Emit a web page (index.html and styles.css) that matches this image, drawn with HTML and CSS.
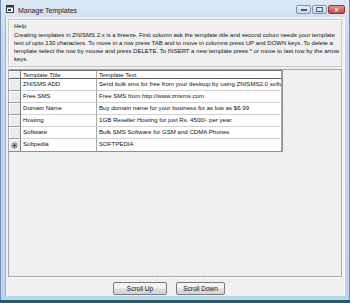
FILE: index.html
```html
<!DOCTYPE html>
<html lang="en">
<head>
    <meta charset="UTF-8">
    <title>Manage Templates</title>
    <link rel="stylesheet" href="styles.css">
</head>
<body>
    <div class="window">
        <div class="titlebar">
            <svg class="app-icon" width="8" height="8" viewBox="0 0 8 8">
                <rect x="0.5" y="0.5" width="7" height="7" fill="#fff" stroke="#2b3a4a"/>
                <rect x="0.5" y="0.5" width="7" height="2" fill="#2b3a4a"/>
                <rect x="2" y="4" width="3" height="2" fill="#2b3a4a"/>
            </svg>
            <span class="title">Manage Templates</span>
            <div class="controls">
                <span class="ctl"><i class="min-bar"></i></span>
                <span class="ctl"><i class="max-box"></i></span>
                <span class="ctl close">&#x2715;</span>
            </div>
        </div>

        <div class="client">
            <div class="help">
                <div class="help-title">Help</div>
                <p class="help-text">
                    Creating templates in ZNISMS 2.x is a breeze. First column ask the template title and second colum needs your template<br>
                    text of upto 130 characters. To move in a row press TAB and to move in columns press UP and DOWN keys. To delete a<br>
                    template select the row by mouse and press DELETE. To INSERT a new template press * or move to last row by the arrow<br>
                    keys.
                </p>
            </div>

            <div class="grid-box">
                <div class="grid">
                    <div class="row head">
                        <div class="cell rh"></div>
                        <div class="cell">Template Title</div>
                        <div class="cell">Template Text</div>
                    </div>
                    <div class="row">
                        <div class="cell rh"></div>
                        <div class="cell">ZNISMS ADD</div>
                        <div class="cell">Send bulk sms for free from your desktop by using ZNISMS2.0 software</div>
                    </div>
                    <div class="row">
                        <div class="cell rh"></div>
                        <div class="cell">Free SMS</div>
                        <div class="cell">Free SMS from http://www.znisms.com</div>
                    </div>
                    <div class="row">
                        <div class="cell rh"></div>
                        <div class="cell">Domain Name</div>
                        <div class="cell">Buy domain name for your business for as low as $6.99</div>
                    </div>
                    <div class="row">
                        <div class="cell rh"></div>
                        <div class="cell">Hosting</div>
                        <div class="cell">1GB Reseller Hosting for just Rs. 4500/- per year.</div>
                    </div>
                    <div class="row">
                        <div class="cell rh"></div>
                        <div class="cell">Software</div>
                        <div class="cell">Bulk SMS Software for GSM and CDMA Phones</div>
                    </div>
                    <div class="row last">
                        <div class="cell rh">
                            <svg width="7" height="7" viewBox="0 0 7 7">
                                <circle cx="3.5" cy="3.5" r="2.6" fill="none" stroke="#555" stroke-width="0.8"/>
                                <circle cx="3.5" cy="3.5" r="1.3" fill="#222"/>
                            </svg>
                        </div>
                        <div class="cell">Softpedia</div>
                        <div class="cell">SOFTPEDIA</div>
                    </div>
                </div>
            </div>

            <div class="buttons">
                <button class="btn up">Scroll Up</button>
                <button class="btn down">Scroll Down</button>
            </div>

            <div class="watermark">SOFTPEDIA<sup>&reg;</sup></div>
        </div>
    </div>
</body>
</html>
```

FILE: styles.css
```css
body {
    margin: 0;
    width: 350px;
    height: 303px;
    background-color: #1d5f6c;
    font-family: "Liberation Sans", Arial, sans-serif;
    overflow: hidden;
}
.window {
    width: 350px;
    height: 300px;
    box-sizing: border-box;
    background: linear-gradient(#dce8f6, #c4d8ef 40px, #bcd3ee);
    border-left: 1px solid #6d8db4;
    border-right: 1px solid #6d8db4;
    display: flex;
    flex-direction: column;
}
.titlebar {
    height: 17px;
    display: flex;
    align-items: center;
    padding-left: 5px;
}
.app-icon {
    margin-top: 1px;
}
.title {
    margin-left: 4px;
    font-size: 7px;
    color: #1b1b1b;
    margin-top: 3px;
}
.controls {
    margin-left: auto;
    margin-right: 4px;
    display: flex;
    gap: 1px;
    margin-top: 1px;
}
.ctl {
    width: 15px;
    height: 9px;
    box-sizing: border-box;
    border: 1px solid #7b95b6;
    border-radius: 2px;
    background: linear-gradient(#e6eef8, #c7d7ea);
    display: flex;
    align-items: center;
    justify-content: center;
}
.min-bar {
    width: 6px;
    height: 2px;
    background: #4a5d75;
    margin-top: 2px;
}
.max-box {
    width: 5px;
    height: 3px;
    border: 1px solid #4a5d75;
}
.ctl.close {
    width: 17px;
    border-color: #8a3b35;
    background: linear-gradient(#e0948a, #c6483b);
    color: #fff;
    font-size: 6px;
    font-weight: bold;
}
.client {
    position: relative;
    height: 279px;
    margin: 0 4px;
    background-color: #f0f0f0;
    border-left: 1px solid #9fb7d3;
    border-right: 1px solid #f5f9fd;
    display: flex;
    flex-direction: column;
}
.help {
    height: 48px;
    margin: 2px 2px 0 2px;
    box-sizing: border-box;
    border: 1px solid #c9c9c9;
    box-shadow: inset 1px 1px #fff;
    padding: 1px 0 0 5px;
    font-size: 6px;
    color: #111;
}
.help-title {
    line-height: 8px;
    margin-top: 1px;
}
.help-text {
    margin: 1px 0 0 0;
    line-height: 8px;
    white-space: nowrap;
}
.grid-box {
    height: 208px;
    margin: 2px 2px 0 2px;
    box-sizing: border-box;
    border: 1px solid #a9a9a9;
    box-shadow: 1px 1px #fff;
}
.grid {
    width: 273px;
    font-size: 6.1px;
    color: #111;
    border-right: 1px solid #8f8f8f;
    border-bottom: 1px solid #8f8f8f;
}
.row {
    display: grid;
    grid-template-columns: 12px 76px 185px;
    height: 12px;
}
.row.head {
    height: 8px;
    border-top: 1px solid #6f6f6f;
}
.cell {
    box-sizing: border-box;
    background-color: #fff;
    border-right: 1px solid #a8a8a8;
    border-bottom: 1px solid #d2d2d2;
    padding-left: 2px;
    line-height: 9px;
    white-space: nowrap;
    overflow: hidden;
}
.row.head .cell {
    line-height: 7px;
    border-bottom: 1px solid #5e5e5e;
}
.cell.rh {
    padding: 0;
    background-color: #ececec;
    border-right: 1px solid #7e7e7e;
    border-bottom: 1px solid #9c9c9c;
    box-shadow: inset 1px 1px #fff;
    display: flex;
    align-items: center;
    justify-content: center;
}
.row.last .cell {
    border-bottom: none;
}
.buttons {
    display: flex;
    justify-content: center;
    gap: 9px;
    margin-top: 5px;
    padding-right: 12px;
}
.btn {
    height: 13px;
    padding: 0;
    font-family: "Liberation Sans", Arial, sans-serif;
    font-size: 6.5px;
    color: #111;
    border: 1px solid #7a7a7a;
    border-radius: 2px;
    background: linear-gradient(#f4f4f4 45%, #dedede 55%, #d4d4d4);
}
.btn.up {
    width: 54px;
}
.btn.down {
    width: 49px;
}
.watermark {
    position: absolute;
    left: 131px;
    top: 253px;
    font-size: 11px;
    letter-spacing: 1px;
    color: rgba(0, 0, 0, 0.05);
    line-height: 11px;
}
.watermark sup {
    font-size: 4px;
}
```
